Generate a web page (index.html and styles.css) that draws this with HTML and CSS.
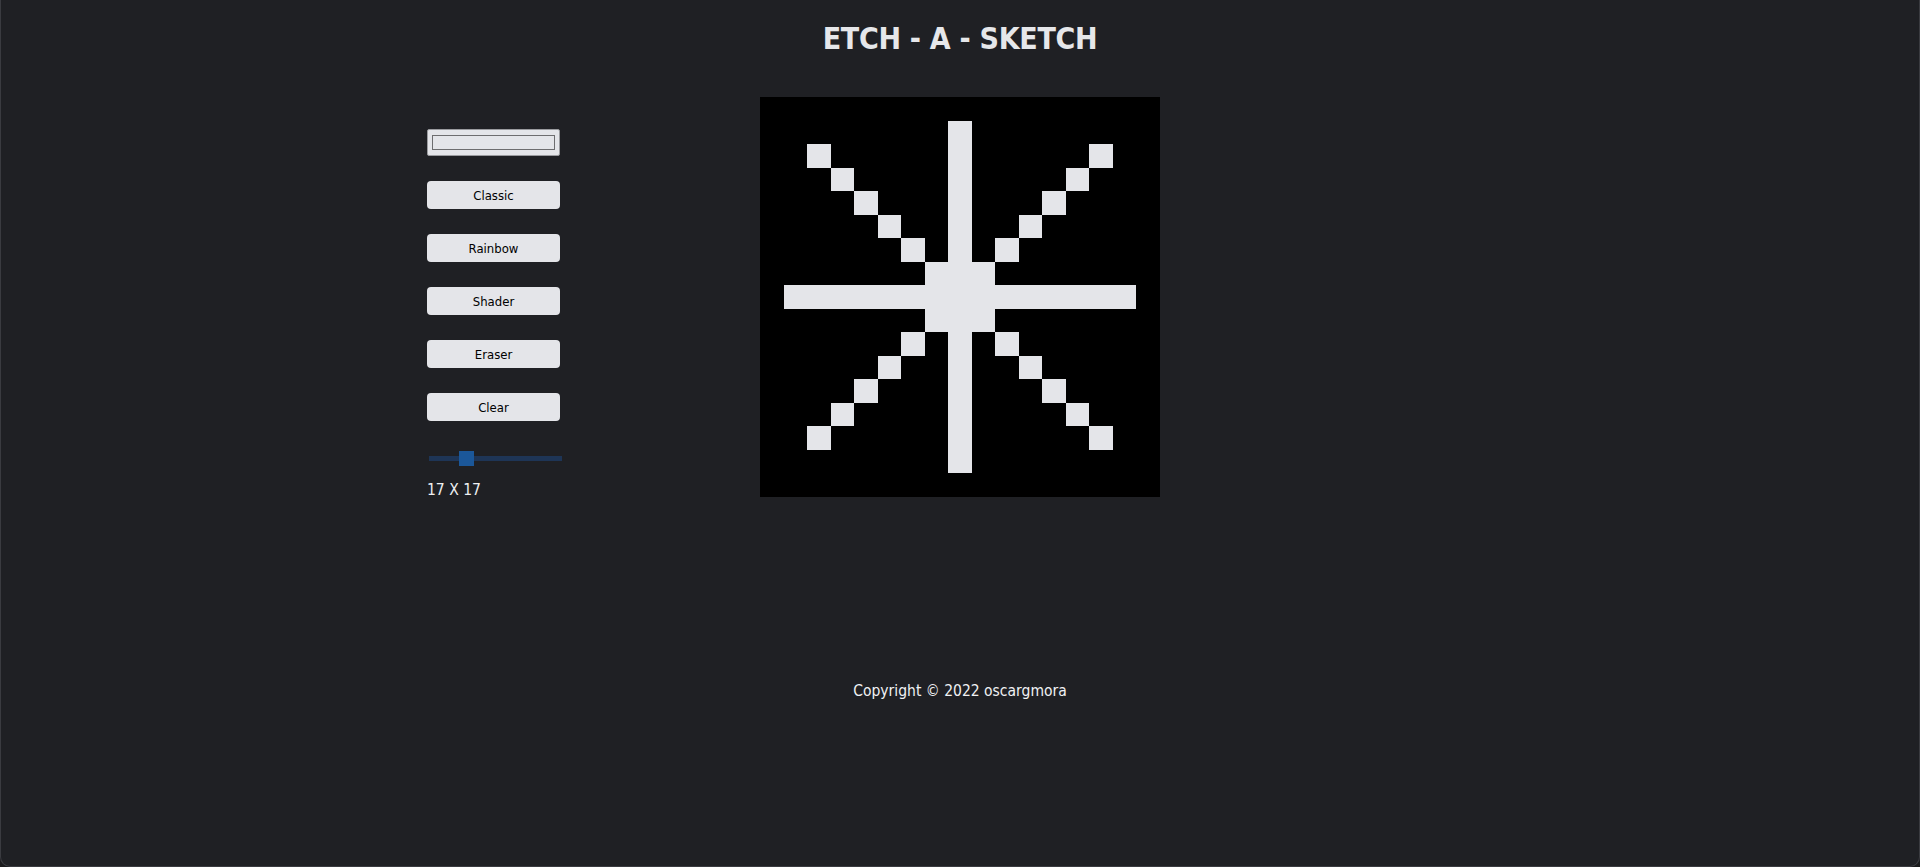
FILE: index.html
```html
<!DOCTYPE html>
<html lang="en">
<head>
<meta charset="utf-8">
<title>Etch-A-Sketch</title>
<link rel="stylesheet" href="styles.css">
</head>
<body>
<div class="window">
  <header class="header">
    <h1 class="title">ETCH - A - SKETCH</h1>
  </header>
  <main class="main">
    <aside class="controls">
      <div class="color-picker"><span class="color-swatch"></span></div>
      <button class="btn">Classic</button>
      <button class="btn">Rainbow</button>
      <button class="btn">Shader</button>
      <button class="btn">Eraser</button>
      <button class="btn">Clear</button>
      <input class="slider" type="range" min="1" max="64" value="17">
      <p class="size-label">17 X 17</p>
    </aside>
    <section class="board" id="board"></section>
    <div class="spacer"></div>
  </main>
  <footer class="footer">Copyright © 2022 oscargmora</footer>
</div>
<script src="script.js"></script>
</body>
</html>
```

FILE: styles.css
```css
* { box-sizing: border-box; }
html, body {
  margin: 0;
  padding: 0;
  background: #1a1a1c;
}
body {
  font-family: "DejaVu Sans Condensed", "DejaVu Sans", Verdana, sans-serif;
  font-stretch: condensed;
  color: #e6e7ea;
}
.window {
  height: 867px;
  background: #1f2024;
  border: 1px solid #3a3b40;
  border-top: none;
  border-radius: 0 0 10px 10px;
  display: flex;
  flex-direction: column;
}
.header {
  display: flex;
  justify-content: center;
  padding-top: 20px;
}
.title {
  margin: 0;
  font-size: 30px;
  font-weight: bold;
  line-height: 38px;
  letter-spacing: -0.3px;
  color: #e6e7ea;
}
.main {
  display: flex;
  justify-content: center;
  gap: 200px;
  margin-top: 39px;
}
.controls {
  width: 133px;
  display: flex;
  flex-direction: column;
  padding-top: 32px;
}
.color-picker {
  width: 133px;
  height: 27px;
  background: #e4e5e9;
  border: 1px solid #9a9b9f;
  border-radius: 2px;
  padding: 5px 4px;
  display: flex;
}
.color-swatch {
  flex: 1;
  border: 1px solid #6d6d6f;
  background: #e4e5e9;
}
.btn {
  width: 133px;
  height: 28px;
  margin-top: 25px;
  background: #e4e5e9;
  border: none;
  border-radius: 4px;
  font-family: inherit;
  font-stretch: condensed;
  font-size: 13px;
  color: #000;
  padding: 0;
}
.slider {
  -webkit-appearance: none;
  appearance: none;
  width: 133px;
  height: 15px;
  margin: 30px 0 0 2px;
  background: transparent;
}
.slider::-webkit-slider-runnable-track {
  height: 5px;
  background: #1e3556;
  border: none;
}
.slider::-webkit-slider-thumb {
  -webkit-appearance: none;
  appearance: none;
  width: 15px;
  height: 15px;
  margin-top: -5px;
  background: #1b5799;
  border: none;
  border-radius: 0;
}
.size-label {
  margin: 15px 0 0;
  font-size: 15.5px;
  color: #eeeff1;
}
.board {
  width: 400px;
  height: 400px;
  background: #000;
  display: grid;
  grid-template-columns: repeat(17, 1fr);
  grid-template-rows: repeat(17, 1fr);
}
.cell { background: #000; }
.cell.on { background: #e4e5e9; }
.spacer { width: 133px; }
.footer {
  margin-top: 183px;
  text-align: center;
  font-size: 15.5px;
  font-weight: normal;
  color: #f0f1f3;
}
```

FILE: script.js
```js
(function () {
  var n = 17;
  var board = document.getElementById('board');
  function lit(r, c) {
    if (c === 8 && r >= 1 && r <= 15) return true;
    if (r === 8 && c >= 1 && c <= 15) return true;
    if (r >= 7 && r <= 9 && c >= 7 && c <= 9) return true;
    if (r >= 2 && r <= 14 && (r === c || r + c === 16)) return true;
    return false;
  }
  for (var r = 0; r < n; r++) {
    for (var c = 0; c < n; c++) {
      var d = document.createElement('div');
      d.className = lit(r, c) ? 'cell on' : 'cell';
      board.appendChild(d);
    }
  }
})();
```
